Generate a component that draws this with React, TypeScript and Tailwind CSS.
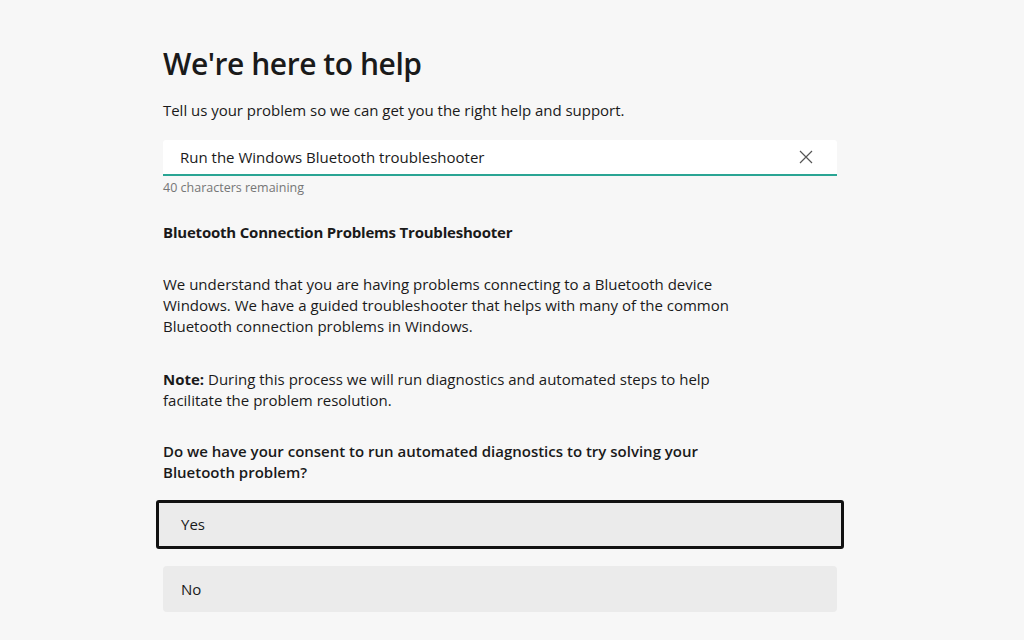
import React from 'react';

const font = { fontFamily: '"Open Sans", "Noto Sans", sans-serif' };

export default function App() {
  return (
    <div className="w-[1024px] h-[640px] overflow-hidden bg-[#f7f7f7] text-[#1a1a1a]" style={font}>
      <div className="w-[674px] ml-[163px] pt-[44px]">
        <h1 className="text-[30px] leading-[40px] font-semibold tracking-[-0.45px]">We're here to help</h1>
        <p className="mt-[16px] text-[15px] leading-[20px] tracking-[-0.03px]">
          Tell us your problem so we can get you the right help and support.
        </p>
        <div className="mt-[20px] h-[36px] bg-white border-b-2 border-[#2aa594] flex items-center pl-[17px] pr-[24px] rounded-t-[3px]">
          <span className="flex-1 text-[15px]">Run the Windows Bluetooth troubleshooter</span>
          <svg width="14" height="14" viewBox="0 0 14 14" className="text-[#555]">
            <path d="M1 1L13 13M13 1L1 13" stroke="currentColor" strokeWidth="1.2" fill="none" />
          </svg>
        </div>
        <div className="mt-[4px] text-[12.5px] leading-[16px] text-[#767676]">40 characters remaining</div>
        <h2 className="mt-[26px] text-[15px] leading-[20px] font-bold tracking-[-0.2px]">
          Bluetooth Connection Problems Troubleshooter
        </h2>
        <p className="mt-[32px] w-[574px] text-[15px] leading-[21px]">
          We understand that you are having problems connecting to a Bluetooth device Windows. We have a guided
          troubleshooter that helps with many of the common Bluetooth connection problems in Windows.
        </p>
        <p className="mt-[32px] w-[574px] text-[15px] leading-[21px]">
          <span className="font-bold">Note:</span> During this process we will run diagnostics and automated steps to
          help facilitate the problem resolution.
        </p>
        <p className="mt-[30px] w-[574px] text-[15px] leading-[21px] font-semibold">
          Do we have your consent to run automated diagnostics to try solving your Bluetooth problem?
        </p>
        <div className="mt-[17px] -mx-[7px] h-[49px] border-[3px] border-[#111] rounded-[3px] bg-[#ebebeb] flex items-center pl-[22px] text-[15px]">
          Yes
        </div>
        <div className="mt-[17px] h-[46px] rounded-[4px] bg-[#ebebeb] flex items-center pl-[18px] text-[15px]">
          No
        </div>
      </div>
    </div>
  );
}
